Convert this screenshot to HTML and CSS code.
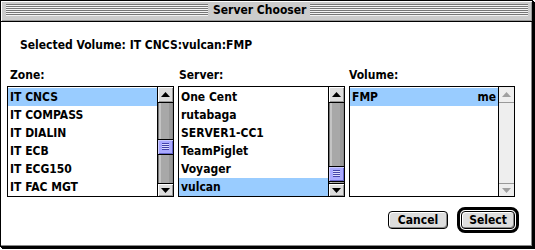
FILE: index.html
```html
<!DOCTYPE html>
<html>
<head>
<meta charset="utf-8">
<title>Server Chooser</title>
<link rel="stylesheet" href="styles.css">
</head>
<body>
<div class="window">
  <div class="titlebar">
    <div class="stripes stripes-left"></div>
    <div class="title">Server Chooser</div>
    <div class="stripes stripes-right"></div>
  </div>
  <div class="content">
    <div class="selected">Selected Volume: IT CNCS:vulcan:FMP</div>
    <div class="columns">
      <div class="col">
        <div class="label label-zone">Zone:</div>
        <div class="list">
          <ul class="items">
            <li class="item sel">IT CNCS</li>
            <li class="item">IT COMPASS</li>
            <li class="item">IT DIALIN</li>
            <li class="item">IT ECB</li>
            <li class="item">IT ECG150</li>
            <li class="item">IT FAC MGT</li>
          </ul>
          <div class="scrollbar">
            <div class="arrow arrow-up"><svg width="9" height="5" viewBox="0 0 9 5"><path d="M4.5 0 L9 5 L0 5 Z" fill="#000"/></svg></div>
            <div class="track"><div class="thumb" style="margin-top:36px"></div></div>
            <div class="arrow arrow-down"><svg width="9" height="5" viewBox="0 0 9 5"><path d="M0 0 L9 0 L4.5 5 Z" fill="#000"/></svg></div>
          </div>
        </div>
      </div>
      <div class="col">
        <div class="label label-server">Server:</div>
        <div class="list">
          <ul class="items">
            <li class="item">One Cent</li>
            <li class="item">rutabaga</li>
            <li class="item">SERVER1-CC1</li>
            <li class="item">TeamPiglet</li>
            <li class="item">Voyager</li>
            <li class="item sel">vulcan</li>
          </ul>
          <div class="scrollbar">
            <div class="arrow arrow-up"><svg width="9" height="5" viewBox="0 0 9 5"><path d="M4.5 0 L9 5 L0 5 Z" fill="#000"/></svg></div>
            <div class="track"><div class="thumb" style="margin-top:63px"></div></div>
            <div class="arrow arrow-down"><svg width="9" height="5" viewBox="0 0 9 5"><path d="M0 0 L9 0 L4.5 5 Z" fill="#000"/></svg></div>
          </div>
        </div>
      </div>
      <div class="col">
        <div class="label label-volume">Volume:</div>
        <div class="list">
          <ul class="items">
            <li class="item sel item-split"><span>FMP</span><span>me</span></li>
          </ul>
          <div class="scrollbar scrollbar-inactive">
            <div class="arrow arrow-up"><svg width="9" height="5" viewBox="0 0 9 5"><path d="M4.5 0 L9 5 L0 5 Z" fill="#a0a0a0"/></svg></div>
            <div class="track"></div>
            <div class="arrow arrow-down"><svg width="9" height="5" viewBox="0 0 9 5"><path d="M0 0 L9 0 L4.5 5 Z" fill="#a0a0a0"/></svg></div>
          </div>
        </div>
      </div>
    </div>
    <div class="buttons">
      <button class="btn btn-cancel">Cancel</button>
      <span class="default-ring"><button class="btn btn-select">Select</button></span>
    </div>
  </div>
</div>
</body>
</html>
```
FILE: styles.css
```css
html, body {
  margin: 0;
  padding: 0;
  background: #ffffff;
}

body {
  width: 535px;
  height: 250px;
  overflow: hidden;
  font-family: "DejaVu Sans Condensed", "DejaVu Sans", sans-serif;
  font-stretch: condensed;
  font-weight: bold;
  font-size: 12px;
  color: #000;
}

.window {
  width: 531px;
  height: 245px;
  border: 1px solid #000;
  box-shadow: 1px 1px 0 #000, 2px 2px 0 #000;
  display: flex;
  flex-direction: column;
  background: #fff;
}

.titlebar {
  height: 20px;
  box-sizing: border-box;
  background: #cccccc;
  border-bottom: 1px solid #000;
  box-shadow: inset 1px 1px 0 #fff, inset -1px -1px 0 #999;
  display: flex;
  align-items: flex-start;
  padding: 3px 4px 0 5px;
  height: 21px;
}

.stripes {
  height: 12px;
  background: repeating-linear-gradient(to bottom, #777 0 1px, #f4f4f4 1px 2px);
}

.stripes-left {
  width: 202px;
}

.stripes-right {
  flex: 1;
}

.title {
  padding: 0 4px 0 5px;
  line-height: 13px;
  height: 13px;
  font-size: 12px;
  white-space: nowrap;
}

.content {
  flex: 1;
  display: flex;
  flex-direction: column;
  box-shadow: inset -1px -1px 0 #888;
}

.selected {
  margin: 15px 0 0 19px;
  line-height: 16px;
  height: 16px;
  white-space: nowrap;
}

.columns {
  display: grid;
  grid-template-columns: 167px 167px 166px;
  column-gap: 4px;
  margin: 14px 0 0 6px;
}

.label {
  line-height: 16px;
  height: 16px;
  margin-bottom: 3px;
}

.label-zone { padding-left: 3px; }
.label-server { padding-left: 1px; }
.label-volume { padding-left: 0; }

.list {
  height: 111px;
  box-sizing: border-box;
  border: 1px solid #000;
  display: flex;
}

.items {
  flex: 1;
  list-style: none;
  margin: 0;
  padding: 1px 0 0 0;
  min-width: 0;
}

.item {
  height: 18px;
  line-height: 18px;
  padding-left: 2px;
  white-space: nowrap;
  overflow: hidden;
}

.item.sel {
  background: #99ccff;
}

.item-split {
  display: flex;
  justify-content: space-between;
  padding-right: 2px;
}

.scrollbar {
  width: 16px;
  box-sizing: border-box;
  border-left: 1px solid #000;
  display: flex;
  flex-direction: column;
}

.arrow {
  display: flex;
  align-items: center;
  justify-content: center;
  background: #dddddd;
  box-shadow: inset 1px 1px 0 #fff, inset -1px -1px 0 #999;
}

.arrow svg {
  display: block;
}

.arrow-up {
  height: 16px;
  box-sizing: border-box;
  border-bottom: 1px solid #000;
}

.arrow-down {
  height: 13px;
  box-sizing: border-box;
  border-top: 1px solid #000;
}

.track {
  flex: 1;
  background: linear-gradient(to right, #777 0 1px, #c4c4c4 1px 3px, #a8a8a8 3px 11px, #999 11px 14px, #888 14px);
}

.thumb {
  height: 16px;
  box-sizing: border-box;
  border-top: 1px solid #000;
  border-bottom: 1px solid #000;
  background-color: #aaaaff;
  background-image: repeating-linear-gradient(to bottom, #4444aa 0 1px, #ddddff 1px 2px);
  background-size: 7px 7px;
  background-position: 4px 3px;
  background-repeat: no-repeat;
  box-shadow: inset 1px 1px 0 #ccccff, inset -1px -1px 0 #6666cc;
}

.scrollbar-inactive .arrow {
  background: #eeeeee;
  box-shadow: none;
}

.scrollbar-inactive .arrow-up {
  border-bottom-color: #999;
}

.scrollbar-inactive .arrow-down {
  border-top-color: #999;
}

.scrollbar-inactive .track {
  background: #eeeeee;
}

.buttons {
  display: flex;
  justify-content: flex-end;
  align-items: center;
  column-gap: 9px;
  margin-top: 10px;
  padding-right: 13px;
}

.btn {
  font: inherit;
  font-stretch: condensed;
  color: #000;
  height: 18px;
  box-sizing: border-box;
  margin: 0;
  padding: 0;
  line-height: 16px;
  border: 1px solid #000;
  border-radius: 4px;
  background: #dddddd;
  box-shadow: inset 1px 1px 0 #fff, inset -1px -1px 0 #888;
  text-align: center;
}

.btn-cancel {
  width: 60px;
}

.btn-select {
  width: 54px;
}

.default-ring {
  display: flex;
  border: 3px solid #000;
  border-radius: 8px;
  padding: 1px;
}
```
